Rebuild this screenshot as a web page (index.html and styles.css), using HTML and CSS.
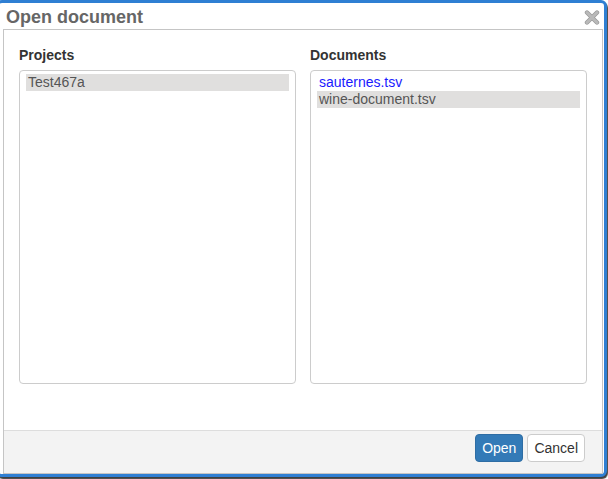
FILE: index.html
```html
<!DOCTYPE html>
<html>
<head>
<meta charset="utf-8">
<title>Open document</title>
<link rel="stylesheet" href="styles.css">
</head>
<body>
<div class="frame">
  <div class="titlebar">
    <span class="title">Open document</span>
    <svg class="close" width="16" height="15" viewBox="0 0 16 15" aria-label="Close">
      <path d="M3 2.5 L13 12.5 M13 2.5 L3 12.5" stroke="#9a9a9a" stroke-width="4.4" stroke-linecap="round"/>
      <path d="M3 2.5 L13 12.5 M13 2.5 L3 12.5" stroke="#b9b9b9" stroke-width="3" stroke-linecap="round"/>
    </svg>
  </div>
  <div class="panel">
    <div class="body">
      <div class="col">
        <div class="label">Projects</div>
        <div class="list">
          <div class="item selected">Test467a</div>
        </div>
      </div>
      <div class="col">
        <div class="label">Documents</div>
        <div class="list">
          <div class="item link">sauternes.tsv</div>
          <div class="item selected">wine-document.tsv</div>
        </div>
      </div>
    </div>
    <div class="footer">
      <button class="btn primary">Open</button>
      <button class="btn">Cancel</button>
    </div>
  </div>
</div>
</body>
</html>
```

FILE: styles.css
```css
html, body {
  margin: 0;
  padding: 0;
  background: #ffffff;
  overflow: hidden;
}
body {
  width: 608px;
  height: 479px;
  font-family: "Liberation Sans", Arial, sans-serif;
}
.frame {
  box-sizing: border-box;
  width: 611px;
  height: 477px;
  margin-left: -4px;
  border: 3px solid #2f7fd3;
  border-radius: 6px;
  background: #ffffff;
  box-shadow: 1px 2px 1px rgba(30, 30, 30, 0.85);
  display: flex;
  flex-direction: column;
}
.titlebar {
  height: 26px;
  display: flex;
  align-items: center;
  justify-content: space-between;
  padding: 0 4px 0 7px;
}
.title {
  font-size: 18px;
  font-weight: bold;
  color: #666666;
  line-height: 26px;
  padding-top: 1px;
}
.close {
  display: block;
  margin-top: 3px;
}
.panel {
  margin: 0 1px 0 4px;
  border: 1px solid #c5c5c5;
  display: flex;
  flex-direction: column;
}
.body {
  display: grid;
  grid-template-columns: 277px 277px;
  column-gap: 14px;
  padding: 15px 15px 46px;
}
.label {
  font-size: 14px;
  font-weight: bold;
  color: #333333;
  line-height: 20px;
  margin-bottom: 5px;
}
.list {
  height: 314px;
  box-sizing: border-box;
  border: 1px solid #cccccc;
  border-radius: 4px;
  padding: 3px 6px;
}
.item {
  font-size: 14px;
  line-height: 17px;
  height: 17px;
  padding: 0 2px;
  color: #555555;
}
.item.selected {
  background: #e0dfde;
}
.item.link {
  color: #1a1aff;
}
.footer {
  height: 39px;
  border-top: 1px solid #dddddd;
  background: #f3f3f3;
  display: flex;
  justify-content: flex-end;
  align-items: flex-start;
  gap: 4px;
  padding: 3px 17px 0 0;
  box-sizing: content-box;
}
.btn {
  font-family: "Liberation Sans", Arial, sans-serif;
  font-size: 14px;
  line-height: 18px;
  padding: 4px 6px;
  border: 1px solid #cccccc;
  border-radius: 4px;
  background: #ffffff;
  color: #333333;
  margin: 0;
}
.btn.primary {
  background: #337ab7;
  border-color: #2e6da4;
  color: #ffffff;
}
```
